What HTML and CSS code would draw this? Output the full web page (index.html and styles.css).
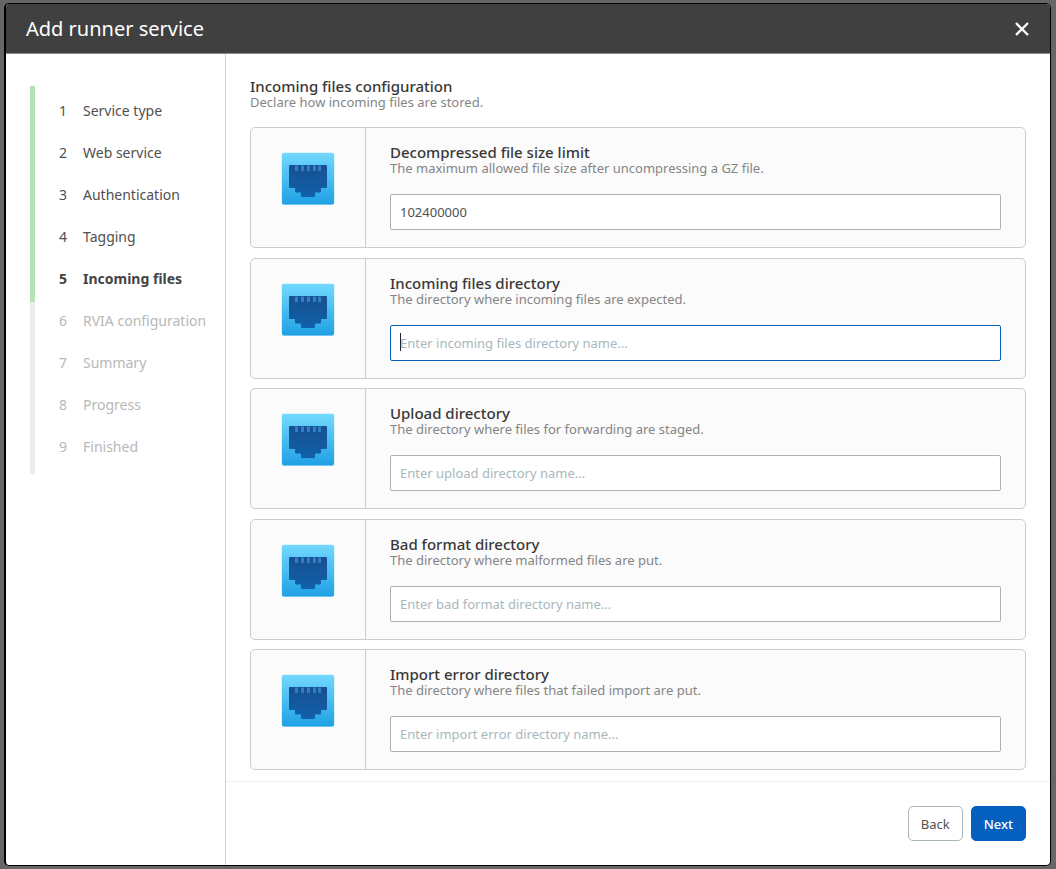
FILE: index.html
```html
<!DOCTYPE html>
<html lang="en">
<head>
<meta charset="utf-8">
<title>Add runner service</title>
<link rel="stylesheet" href="styles.css">
</head>
<body>
<svg class="defs" width="0" height="0" aria-hidden="true">
  <defs>
    <linearGradient id="port-face" x1="0" y1="0" x2="0" y2="1"><stop offset="0" stop-color="#72d9ff"/><stop offset="1" stop-color="#1fa0e4"/></linearGradient>
    <linearGradient id="port-hole" x1="0" y1="0" x2="0" y2="1"><stop offset="0" stop-color="#17508f"/><stop offset="1" stop-color="#1061ab"/></linearGradient>
    <symbol id="port" viewBox="0 0 54 54">
      <rect x="0.5" y="0.5" width="53" height="52.5" rx="2.5" fill="#bdeaff"/>
      <rect x="1" y="1" width="52" height="51.5" rx="2" fill="url(#port-face)"/>
      <path d="M9 13h36a1 1 0 0 1 1 1v21a1 1 0 0 1-1 1h-5v3.500a1 1 0 0 1-1 1h-5v3.500a1 1 0 0 1-1 1H21a1 1 0 0 1-1-1v-3.500h-5a1 1 0 0 1-1-1V36H9a1 1 0 0 1-1-1V14a1 1 0 0 1 1-1z" fill="url(#port-hole)"/>
      <path d="M14 13.500h3v5.500h-3zM20 13.500h3v5.500h-3zM26 13.500h3v5.500h-3zM32 13.500h3v5.500h-3zM37 13.500h3v5.500h-3z" fill="#2e7fc8"/>
    </symbol>
  </defs>
</svg>
<main class="dialog" role="dialog" aria-labelledby="dialog-title">
  <header class="dialog-header">
    <h1 class="dialog-title" id="dialog-title">Add runner service</h1>
    <button class="close" type="button" aria-label="Close"><svg width="14" height="14" viewBox="0 0 14 14"><path d="M1 1l12 12M13 1L1 13" stroke="#fff" stroke-width="2.3" fill="none"/></svg></button>
  </header>
  <div class="dialog-body">
    <nav class="sidebar" aria-label="Steps">
      <ol class="steps">
        <li class="step done"><span class="num">1</span>Service type</li>
        <li class="step done"><span class="num">2</span>Web service</li>
        <li class="step done"><span class="num">3</span>Authentication</li>
        <li class="step done"><span class="num">4</span>Tagging</li>
        <li class="step current" aria-current="step"><span class="num">5</span>Incoming files</li>
        <li class="step"><span class="num">6</span>RVIA configuration</li>
        <li class="step"><span class="num">7</span>Summary</li>
        <li class="step"><span class="num">8</span>Progress</li>
        <li class="step"><span class="num">9</span>Finished</li>
      </ol>
    </nav>
    <form class="content">
      <div class="page">
        <h2 class="title">Incoming files configuration</h2>
        <p class="hint">Declare how incoming files are stored.</p>
        <div class="cards">
          <section class="card">
            <div class="card-icon"><svg width="54" height="54"><use href="#port"/></svg></div>
            <div class="card-main"><label class="title" for="limit">Decompressed file size limit</label><p class="hint">The maximum allowed file size after uncompressing a GZ file.</p><div class="field"><input class="input" id="limit" type="text" value="102400000"></div></div>
          </section>
          <section class="card">
            <div class="card-icon"><svg width="54" height="54"><use href="#port"/></svg></div>
            <div class="card-main"><label class="title" for="incoming">Incoming files directory</label><p class="hint">The directory where incoming files are expected.</p><div class="field focused"><input class="input" id="incoming" type="text" placeholder="Enter incoming files directory name..."></div></div>
          </section>
          <section class="card">
            <div class="card-icon"><svg width="54" height="54"><use href="#port"/></svg></div>
            <div class="card-main"><label class="title" for="upload">Upload directory</label><p class="hint">The directory where files for forwarding are staged.</p><div class="field"><input class="input" id="upload" type="text" placeholder="Enter upload directory name..."></div></div>
          </section>
          <section class="card">
            <div class="card-icon"><svg width="54" height="54"><use href="#port"/></svg></div>
            <div class="card-main"><label class="title" for="bad">Bad format directory</label><p class="hint">The directory where malformed files are put.</p><div class="field"><input class="input" id="bad" type="text" placeholder="Enter bad format directory name..."></div></div>
          </section>
          <section class="card">
            <div class="card-icon"><svg width="54" height="54"><use href="#port"/></svg></div>
            <div class="card-main"><label class="title" for="error">Import error directory</label><p class="hint">The directory where files that failed import are put.</p><div class="field"><input class="input" id="error" type="text" placeholder="Enter import error directory name..."></div></div>
          </section>
        </div>
      </div>
      <footer class="actions">
        <button class="btn" type="button">Back</button>
        <button class="btn primary" type="submit">Next</button>
      </footer>
    </form>
  </div>
</main>
</body>
</html>
```

FILE: styles.css
```css
* { box-sizing: border-box; }
body {
  margin: 0;
  min-height: 100vh;
  display: flex;
  padding: 3px 5px 3px 4px;
  background: #666;
  color: #444;
  font: 14px/20px "Noto Sans", sans-serif;
}
h1, h2, p, ol { margin: 0; padding: 0; }
.defs { position: absolute; }
button, input { font: inherit; }

.dialog {
  flex: 1;
  display: flex;
  flex-direction: column;
  border: 1px solid #000;
  border-left-width: 2px;
  border-radius: 5px;
  background: #fff;
  overflow: hidden;
}
.dialog-header {
  display: flex;
  align-items: center;
  justify-content: space-between;
  height: 50px;
  padding: 0 21px 0 20px;
  background: #404040;
  border-bottom: 1px solid #8c8c8c;
}
.dialog-title { font-size: 20px; line-height: 28px; font-weight: 400; color: #fff; }
.close { display: flex; padding: 0; border: 0; background: none; cursor: pointer; }
.dialog-body { flex: 1; display: flex; }

.sidebar { width: 220px; padding: 32px 0 0 24px; border-right: 1px solid #d3d3d3; }
.steps {
  list-style: none;
  padding: 4px 0 6px 24px;
  border-left: 5px solid;
  border-image: linear-gradient(#b5e3b5 0 216px, #ececec 216px) 1;
}
.step { display: flex; height: 42px; align-items: center; color: #b8b8b8; }
.num { width: 24px; }
.done { color: #505050; }
.current { color: #444; font-weight: 700; }

.content { flex: 1; display: flex; flex-direction: column; min-width: 0; }
.page { flex: 1; display: flex; flex-direction: column; padding: 24px 24px 11px; }
.title { display: block; font-size: 15px; line-height: 17px; font-weight: 500; color: #383838; }
.hint { font-size: 13px; line-height: 15px; color: #858585; }
.cards { flex: 1; display: flex; flex-direction: column; justify-content: space-between; gap: 8px; margin-top: 17px; }
.card { display: flex; border: 1px solid #ccc; border-radius: 5px; background: #fbfbfb; }
.card-icon { width: 115px; padding: 24px 0 0 30px; border-right: 1px solid #ccc; }
.card-icon svg { display: block; }
.card-main { flex: 1; padding: 16px 24px; }
.field { position: relative; display: flex; margin-top: 18px; padding-bottom: 1px; }
.input {
  flex: 1;
  min-width: 0;
  height: 36px;
  padding: 0 9px;
  border: 1px solid #b0b0b0;
  border-radius: 2px;
  background: #fff;
  color: #505050;
  font-size: 13px;
  outline: 0;
}
.input::placeholder { color: #a8b8bc; opacity: 1; }
.focused .input { border-color: #0560b8; }
.focused::before {
  content: "";
  position: absolute;
  left: 10px;
  top: 8px;
  width: 1px;
  height: 18px;
  background: #222;
}

.actions { display: flex; justify-content: flex-end; gap: 8px; padding: 24px; border-top: 1px solid #eee; }
.btn {
  height: 35px;
  padding: 0 12px;
  border: 1px solid #a8b5b9;
  border-radius: 5px;
  background: #fff;
  color: #505050;
  font-size: 13px;
  cursor: pointer;
}
.primary { border-color: #0560c0; background: #0560c0; color: #fff; font-weight: 500; }
```
